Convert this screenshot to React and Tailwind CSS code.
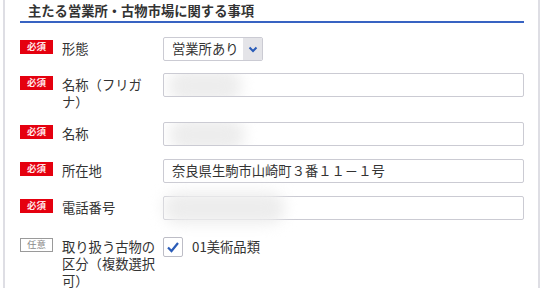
import React from "react";

const font = { fontFamily: '"Noto Sans CJK JP", "Noto Sans", sans-serif' };

function Required() {
  return (
    <div className="mt-[3px] flex h-[14px] w-[33px] shrink-0 items-center justify-center bg-[#e5000f] text-[9.5px] font-bold leading-none text-[#ffe4e8]">
      必須
    </div>
  );
}

function Optional() {
  return (
    <div className="mt-[3px] flex h-[14px] w-[33px] shrink-0 items-center justify-center border border-[#9a9a9a] bg-white text-[9.5px] leading-none text-[#8a8a8a]">
      任意
    </div>
  );
}

function Blur({ className }) {
  return <div className={"pointer-events-none absolute rounded-full bg-[#ededed] blur-[7px] " + className} />;
}

function Row({ badge, label, children, className = "" }) {
  return (
    <div className={"flex items-start " + className}>
      {badge}
      <div className="ml-[9px] mr-[6px] w-[95px] shrink-0 pt-[3px] text-[13.3px] leading-[17px] text-[#333]">{label}</div>
      <div className="min-w-0 flex-1">{children}</div>
    </div>
  );
}

function TextBox({ value, blur }) {
  return (
    <div className="relative h-[24px] w-full overflow-hidden rounded-[2px] border border-[#cbcbd3] bg-white pl-[8px] text-[13.3px] leading-[22px] text-[#333]">
      {value}
      {blur}
    </div>
  );
}

export default function App() {
  return (
    <div className="h-[288px] w-[552px] overflow-hidden bg-white" style={font}>
      <div className="ml-[3px] h-full w-[537px] border-l-[2px] border-r-[2px] border-[#dedee4] pl-[15px] pr-[14px]">
        <div className="h-[23px] border-b-[2px] border-[#3863c2] pl-[8px] pt-[2px] text-[13.3px] font-bold leading-[18px] text-[#333]">
          主たる営業所・古物市場に関する事項
        </div>

        <Row badge={<Required />} label="形態" className="mt-[14px]">
          <div className="flex h-[24px] w-[100px] items-stretch overflow-hidden rounded-[2px] border border-[#cbcbd3] bg-white">
            <div className="flex-1 pl-[8px] text-[13.3px] leading-[22px] text-[#333]">営業所あり</div>
            <div className="flex w-[19px] items-center justify-center bg-[#e4e4e8]">
              <svg width="10" height="7" viewBox="0 0 10 7">
                <path d="M1.5 1.5 L5 5 L8.5 1.5" fill="none" stroke="#2a5cb8" strokeWidth="2" />
              </svg>
            </div>
          </div>
        </Row>

        <Row badge={<Required />} label="名称（フリガナ）" className="mt-[12px]">
          <TextBox blur={<Blur className="left-[4px] top-[-4px] h-[32px] w-[74px]" />} />
        </Row>

        <Row badge={<Required />} label="名称" className="mt-[12px]">
          <TextBox blur={<Blur className="left-[5px] top-[-4px] h-[32px] w-[76px]" />} />
        </Row>

        <Row badge={<Required />} label="所在地" className="mt-[13px]">
          <TextBox value="奈良県生駒市山崎町３番１１－１号" />
        </Row>

        <Row badge={<Required />} label="電話番号" className="mt-[13px]">
          <div className="relative">
            <TextBox />
            <Blur className="left-[0px] top-[-4px] h-[32px] w-[122px]" />
          </div>
        </Row>

        <Row badge={<Optional />} label="取り扱う古物の区分（複数選択可）" className="mt-[15px]">
          <div className="flex items-start">
            <div className="mt-[2px] flex h-[20px] w-[20px] items-center justify-center rounded-[2px] border border-[#bdbdc6] bg-white">
              <svg width="14" height="12" viewBox="0 0 14 12">
                <path d="M2 6.5 L5.5 10 L12 2" fill="none" stroke="#2a5cb8" strokeWidth="2.2" />
              </svg>
            </div>
            <div className="ml-[9px] pt-[3px] text-[13.3px] leading-[17px] text-[#333]">01美術品類</div>
          </div>
        </Row>
      </div>
    </div>
  );
}
